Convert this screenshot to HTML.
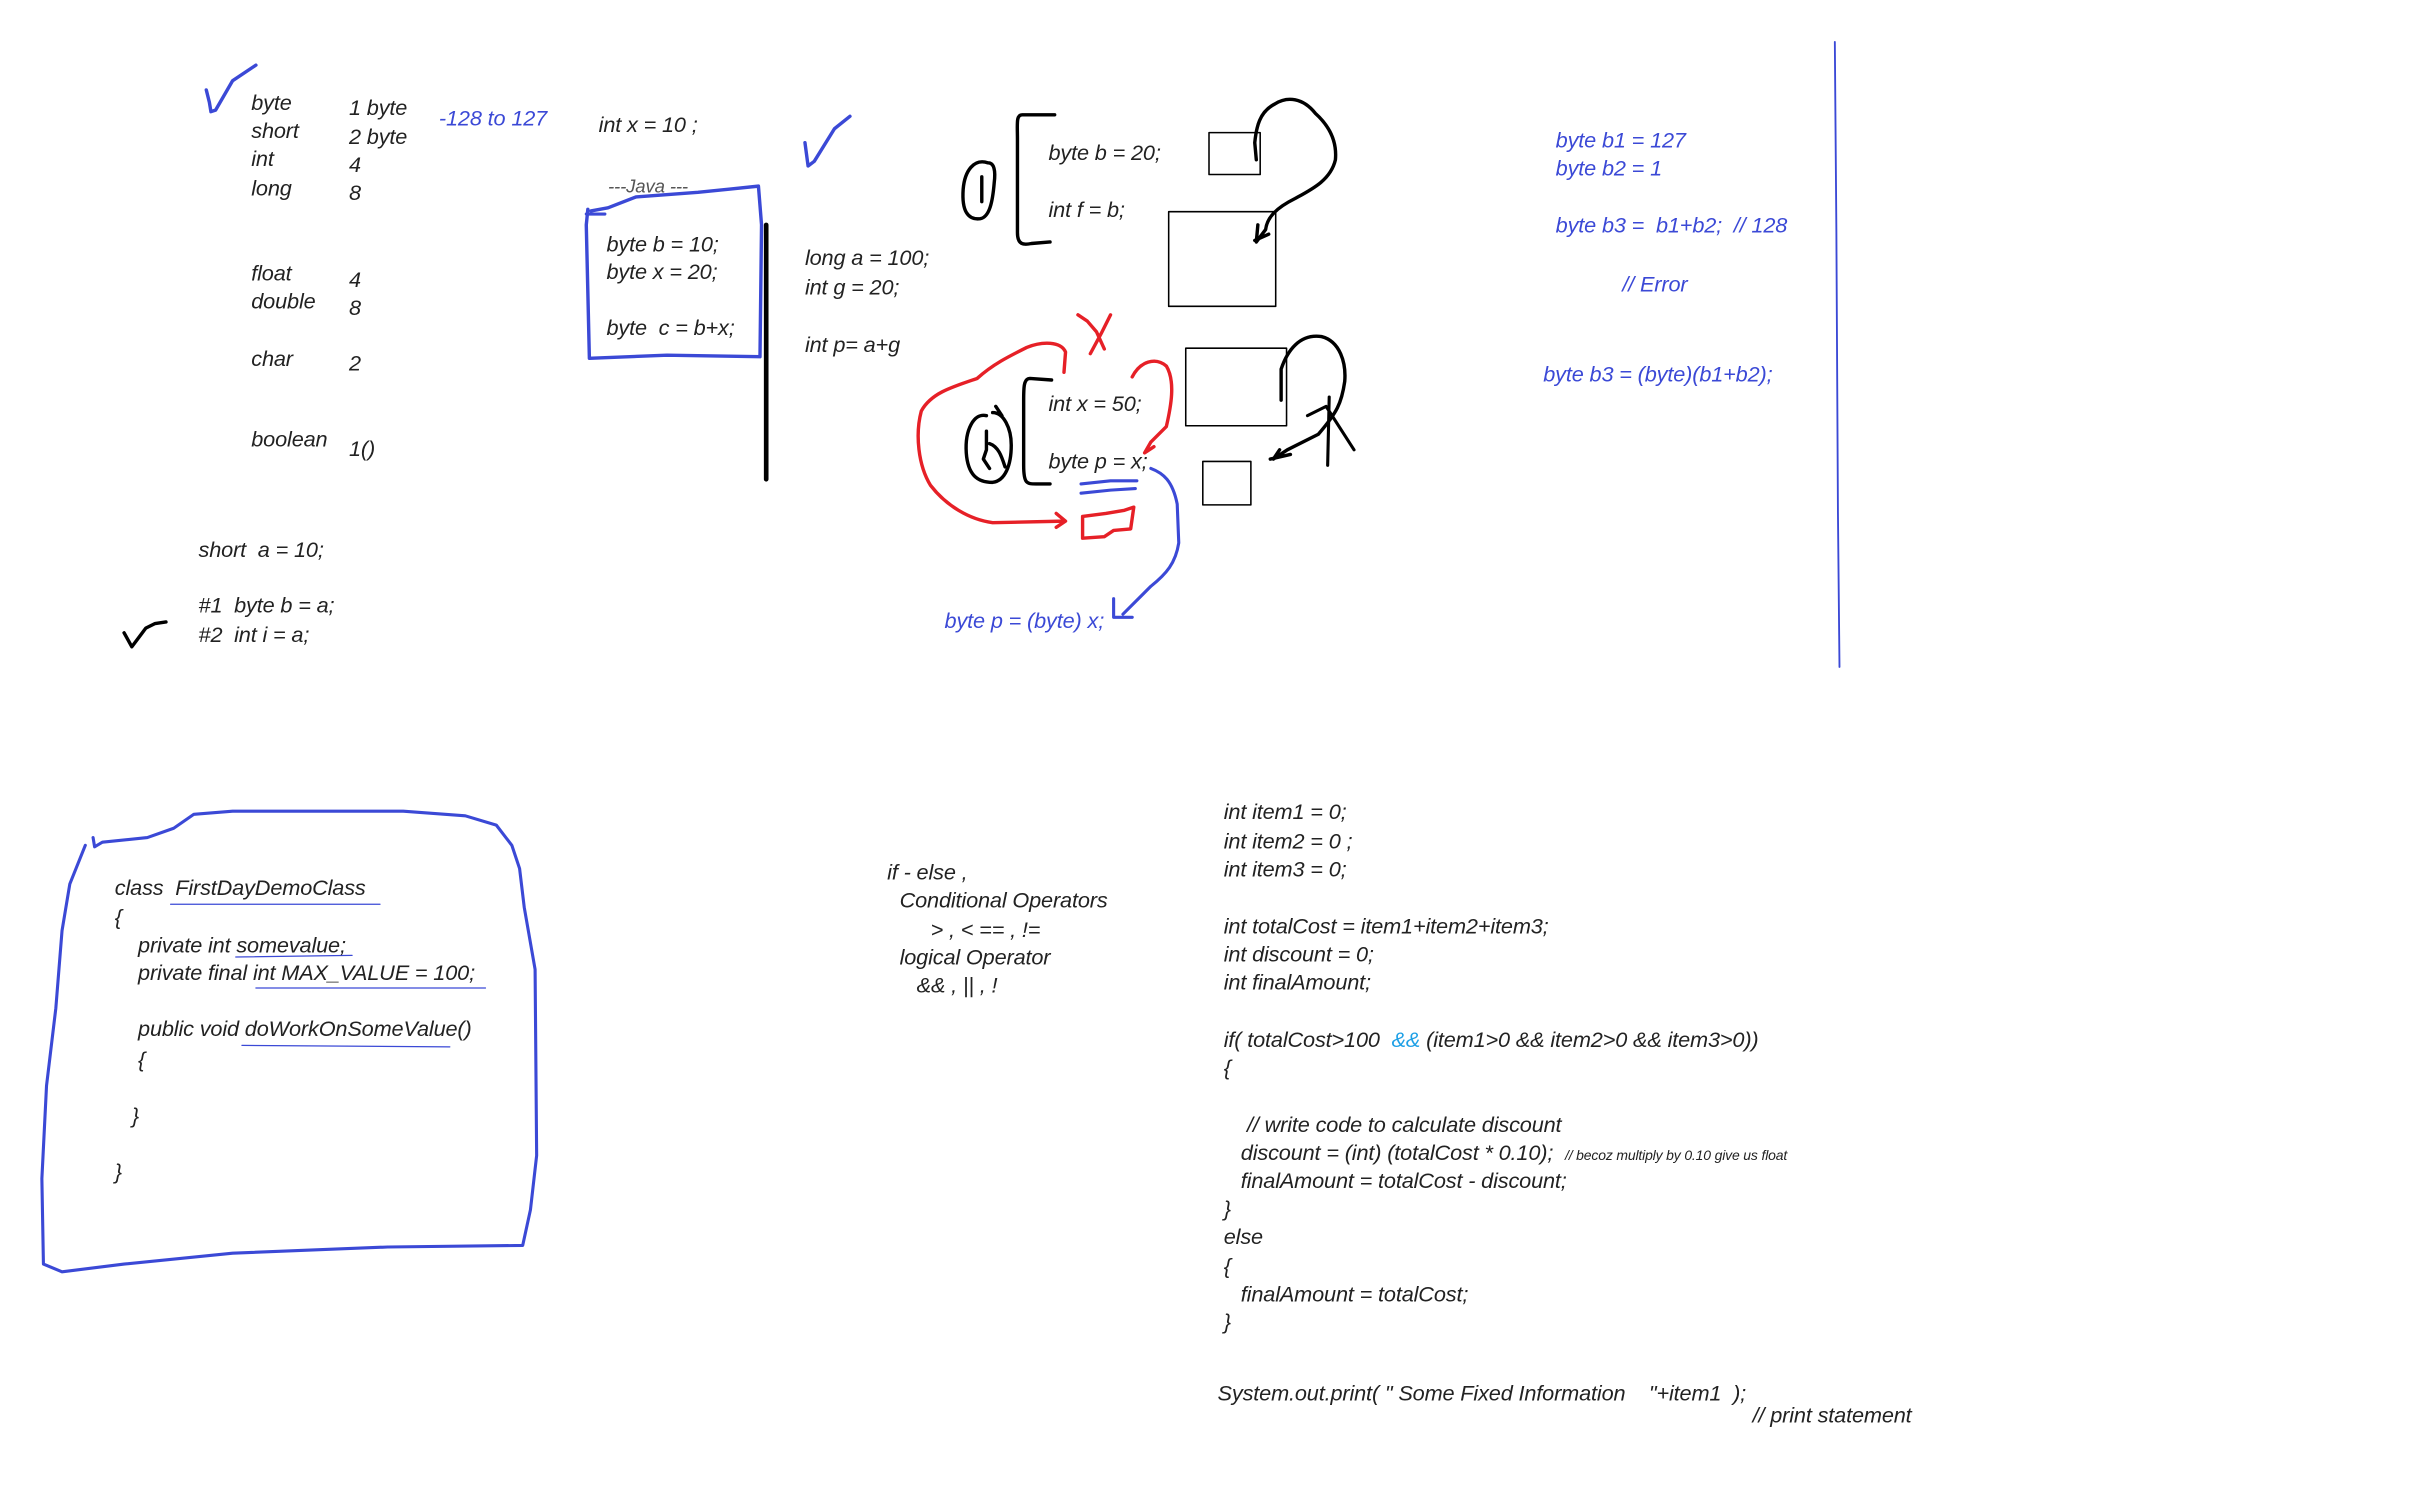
<!DOCTYPE html>
<html><head><meta charset="utf-8"><style>
html,body{margin:0;padding:0;background:#fff;}
body{width:2431px;height:1483px;overflow:hidden;position:relative;}
#c{position:absolute;left:0;top:0;width:1570px;height:960px;transform:scale(1.551);transform-origin:0 0;}
.t{position:absolute;font-family:"Liberation Sans",sans-serif;font-style:italic;font-size:14px;line-height:18px;color:#222;white-space:pre;letter-spacing:-0.1px;transform:translateY(-9px);}
.b{color:#3b49d6;}
.s{font-size:9px;}
svg{position:absolute;left:0;top:0;}
</style></head><body><div id="c">
<svg width="1570" height="960" viewBox="0 0 1570 960" fill="none" stroke-linecap="round" stroke-linejoin="round">
<path d="M133,58 L135,66 L136,72 L139,71 L150,52 L165,42" stroke="#3b49d6" stroke-width="2.2"/>
<path d="M519,92 L521,107 L525,104 L538,83 L548,75" stroke="#3b49d6" stroke-width="2.2"/>
<path d="M80,408 L85,417 L94,405 L100,402 L107,401" stroke="#000" stroke-width="2.2"/>
<path d="M381,136 L392,134 L410,127 L450,124 L470,122 L489,120 L491,145 L490,230 L430,229 L380,231 L378,145 L379,135" stroke="#3b49d6" stroke-width="2.2"/>
<path d="M378,138 L390,138" stroke="#3b49d6" stroke-width="2"/>
<line x1="494" y1="145" x2="494" y2="309" stroke="#000" stroke-width="3"/>
<path d="M637,105 C628,102 622,110 621,122 C620,136 624,142 632,141 C638,140 640,130 641,118 C642,110 641,105 637,105 Z M633,114 L633,130" stroke="#000" stroke-width="2.2"/>
<path d="M680,74 L659,74 C655,74 656,80 656,90 L656,150 C656,158 660,158 665,157 L677,156" stroke="#000" stroke-width="2.2"/>
<rect x="779.5" y="85.5" width="33" height="27" stroke="#000" stroke-width="1"/>
<rect x="753.5" y="136.5" width="69" height="61" stroke="#000" stroke-width="1"/>
<rect x="764.5" y="224.5" width="65" height="50" stroke="#000" stroke-width="1"/>
<rect x="775.5" y="297.5" width="31" height="28" stroke="#000" stroke-width="1"/>
<path d="M810,103 L809,92 C810,82 812,72 822,67 C830,62 840,63 848,73 C858,82 862,92 861,103 C858,116 846,122 835,128 C823,134 817,140 816,148 L810,156 L811,145 M809,155 L818,151" stroke="#000" stroke-width="2.2"/>
<path d="M636,268 C628,266 622,277 623,292 C624,306 630,311 640,311 C648,310 652,300 652,287 C652,276 647,266 640,266 M636,278 L636,290 L634,296 L638,302 M638,286 C644,288 646,295 648,301 M642,262 L646,268" stroke="#000" stroke-width="2.2"/>
<path d="M678,245 L664,244 C660,244 660,250 660,258 L660,300 C660,312 662,312 668,312 L677,312" stroke="#000" stroke-width="2.2"/>
<path d="M826,258 L826,238 C830,226 838,215 852,217 C864,220 868,234 867,246 C865,260 862,266 850,280 L830,290 L821,296 L825,290 M819,296 L832,293" stroke="#000" stroke-width="2.2"/>
<path d="M843,268 L855,262 L873,290 M857,256 L856,300" stroke="#000" stroke-width="2"/>
<path d="M695,203 L701,207 L707,214 L712,225 M716,203 L710,215 L703,228" stroke="#e62027" stroke-width="2.2"/>
<path d="M686,240 L687,227 C684,220 672,220 662,224 C650,230 640,235 630,244 C612,250 600,254 594,265 C590,280 592,300 600,313 C610,326 625,335 640,337 L686,336 M681,331 L687,336 L681,340" stroke="#e62027" stroke-width="2.2"/>
<path d="M730,243 C735,233 745,230 752,236 C758,246 755,262 752,275 L742,285 L738,292 L744,288" stroke="#e62027" stroke-width="2.2"/>
<path d="M698,333 L698,347 L712,346 L718,342 L729,341 L731,327 L725,329 L713,331 Z" stroke="#e62027" stroke-width="2.2"/>
<path d="M697,312 L716,310 L733,310 M697,318 L716,316 L732,315" stroke="#3b49d6" stroke-width="2"/>
<path d="M742,302 C750,305 756,310 759,325 L760,350 C758,363 752,370 742,378 L730,390 L724,396 L730,390 M718,398 L730,398 M718,386 L718,398" stroke="#3b49d6" stroke-width="2"/>
<path d="M1183,27 L1184,150 L1185,330 L1186,430" stroke="#3b49d6" stroke-width="1.2"/>
<path d="M60,540 L61,546 L66,543 L95,540 L112,534 L125,525 L150,523 L260,523 L300,526 L320,532 L330,545 L335,560 L338,585 L345,625 L346,745 L342,780 L337,803 L250,804 L150,808 L80,815 L40,820 L28,815 L27,760 L30,700 L36,650 L40,600 L45,570 L55,545" stroke="#3b49d6" stroke-width="2"/>
<path d="M110,583 L245,583 M152,617 L227,616 M165,637 L313,637 M156,674 L290,675" stroke="#3b49d6" stroke-width="0.8"/>
</svg>

<div class="t" style="left:162px;top:66px">byte</div>
<div class="t" style="left:162px;top:84px">short</div>
<div class="t" style="left:162px;top:102px">int</div>
<div class="t" style="left:162px;top:121px">long</div>
<div class="t" style="left:225px;top:69px">1 byte</div>
<div class="t" style="left:225px;top:88px">2 byte</div>
<div class="t" style="left:225px;top:106px">4</div>
<div class="t" style="left:225px;top:124px">8</div>
<div class="t b" style="left:283px;top:76px">-128 to 127</div>
<div class="t" style="left:162px;top:176px">float</div>
<div class="t" style="left:225px;top:180px">4</div>
<div class="t" style="left:162px;top:194px">double</div>
<div class="t" style="left:225px;top:198px">8</div>
<div class="t" style="left:162px;top:231px">char</div>
<div class="t" style="left:225px;top:234px">2</div>
<div class="t" style="left:162px;top:283px">boolean</div>
<div class="t" style="left:225px;top:289px">1()</div>

<div class="t" style="left:386px;top:80px">int x = 10 ;</div>
<div class="t" style="left:392px;top:120px;color:#555;font-size:12px">---Java ---</div>
<div class="t" style="left:391px;top:157px">byte b = 10;</div>
<div class="t" style="left:391px;top:175px">byte x = 20;</div>
<div class="t" style="left:391px;top:211px">byte  c = b+x;</div>

<div class="t" style="left:519px;top:166px">long a = 100;</div>
<div class="t" style="left:519px;top:185px">int g = 20;</div>
<div class="t" style="left:519px;top:222px">int p= a+g</div>

<div class="t" style="left:676px;top:98px">byte b = 20;</div>
<div class="t" style="left:676px;top:135px">int f = b;</div>
<div class="t" style="left:676px;top:260px">int x = 50;</div>
<div class="t" style="left:676px;top:297px">byte p = x;</div>
<div class="t b" style="left:609px;top:400px">byte p = (byte) x;</div>

<div class="t b" style="left:1003px;top:90px">byte b1 = 127</div>
<div class="t b" style="left:1003px;top:108px">byte b2 = 1</div>
<div class="t b" style="left:1003px;top:145px">byte b3 =  b1+b2;  // 128</div>
<div class="t b" style="left:1046px;top:183px">// Error</div>
<div class="t b" style="left:995px;top:241px">byte b3 = (byte)(b1+b2);</div>

<div class="t" style="left:128px;top:354px">short  a = 10;</div>
<div class="t" style="left:128px;top:390px">#1  byte b = a;</div>
<div class="t" style="left:128px;top:409px">#2  int i = a;</div>

<div class="t" style="left:74px;top:572px">class  FirstDayDemoClass</div>
<div class="t" style="left:74px;top:591px">{</div>
<div class="t" style="left:89px;top:609px">private int somevalue;</div>
<div class="t" style="left:89px;top:627px">private final int MAX_VALUE = 100;</div>
<div class="t" style="left:89px;top:663px">public void doWorkOnSomeValue()</div>
<div class="t" style="left:89px;top:683px">{</div>
<div class="t" style="left:85px;top:719px">}</div>
<div class="t" style="left:74px;top:755px">}</div>

<div class="t" style="left:572px;top:562px">if - else ,</div>
<div class="t" style="left:580px;top:580px">Conditional Operators</div>
<div class="t" style="left:600px;top:599px">&gt; , &lt; == , !=</div>
<div class="t" style="left:580px;top:617px">logical Operator</div>
<div class="t" style="left:591px;top:635px">&amp;&amp; , || , !</div>

<div class="t" style="left:789px;top:523px">int item1 = 0;</div>
<div class="t" style="left:789px;top:542px">int item2 = 0 ;</div>
<div class="t" style="left:789px;top:560px">int item3 = 0;</div>
<div class="t" style="left:789px;top:597px">int totalCost = item1+item2+item3;</div>
<div class="t" style="left:789px;top:615px">int discount = 0;</div>
<div class="t" style="left:789px;top:633px">int finalAmount;</div>
<div class="t" style="left:789px;top:670px">if( totalCost&gt;100  <span style="color:#1ea0e6">&amp;&amp;</span> (item1&gt;0 &amp;&amp; item2&gt;0 &amp;&amp; item3&gt;0))</div>
<div class="t" style="left:789px;top:688px">{</div>
<div class="t" style="left:804px;top:725px">// write code to calculate discount</div>
<div class="t" style="left:800px;top:743px">discount = (int) (totalCost * 0.10);  <span class="s">// becoz multiply by 0.10 give us float</span></div>
<div class="t" style="left:800px;top:761px">finalAmount = totalCost - discount;</div>
<div class="t" style="left:789px;top:779px">}</div>
<div class="t" style="left:789px;top:797px">else</div>
<div class="t" style="left:789px;top:816px">{</div>
<div class="t" style="left:800px;top:834px">finalAmount = totalCost;</div>
<div class="t" style="left:789px;top:852px">}</div>
<div class="t" style="left:785px;top:898px">System.out.print( " Some Fixed Information    "+item1  );</div>
<div class="t" style="left:1130px;top:912px">// print statement</div>
</div></body></html>
